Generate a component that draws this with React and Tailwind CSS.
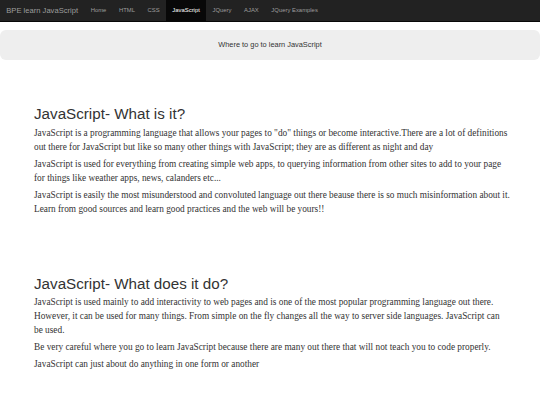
import React from "react";

const links = ["Home", "HTML", "CSS", "JavaScript", "JQuery", "AJAX", "JQuery Examples"];

const Section = ({ title, paras, className }) => (
  <div className={className}>
    <h2 className="text-[15.2px] leading-[1.1] text-[#333] mb-[3px]">{title}</h2>
    {paras.map((lines, i) => (
      <p key={i} className="font-['Liberation_Serif',serif] text-[9.3px] leading-[14px] text-[#333] mb-[3px]">
        {lines.map((line, j) => (
          <React.Fragment key={j}>
            {j > 0 && <br />}
            {line}
          </React.Fragment>
        ))}
      </p>
    ))}
  </div>
);

export default function App() {
  return (
    <div className="min-h-screen bg-white font-['Liberation_Sans',Arial,sans-serif]">
      {/* Navbar */}
      <nav className="h-[21.5px] bg-[#222] border-b border-[#080808] flex items-stretch pl-[6.3px]">
        <span className="flex items-center text-[7.6px] text-[#9d9d9d] pr-[6.3px]">BPE learn JavaScript</span>
        <ul className="flex items-stretch">
          {links.map((l) => (
            <li
              key={l}
              className={`flex items-center px-[6.3px] text-[5.9px] ${
                l === "JavaScript" ? "bg-[#080808] text-white" : "text-[#9d9d9d]"
              }`}
            >
              {l}
            </li>
          ))}
        </ul>
      </nav>

      {/* Jumbotron */}
      <div className="mt-[8.5px] h-[30px] rounded-[6px] bg-[#eee] flex items-center justify-center text-[7.4px] text-[#333]">
        Where to go to learn JavaScript
      </div>

      <div className="pl-[34px] pr-[4px]">
        <Section
          className="pt-[46px]"
          title="JavaScript- What is it?"
          paras={[
            [
              'JavaScript is a programming language that allows your pages to "do" things or become interactive.There are a lot of definitions',
              "out there for JavaScript but like so many other things with JavaScript; they are as different as night and day",
            ],
            [
              "JavaScript is used for everything from creating simple web apps, to querying information from other sites to add to your page",
              "for things like weather apps, news, calanders etc...",
            ],
            [
              "JavaScript is easily the most misunderstood and convoluted language out there beause there is so much misinformation about it.",
              "Learn from good sources and learn good practices and the web will be yours!!",
            ],
          ]}
        />
        <Section
          className="pt-[57px]"
          title="JavaScript- What does it do?"
          paras={[
            [
              "JavaScript is used mainly to add interactivity to web pages and is one of the most popular programming language out there.",
              "However, it can be used for many things. From simple on the fly changes all the way to server side languages. JavaScript can",
              "be used.",
            ],
            ["Be very careful where you go to learn JavaScript because there are many out there that will not teach you to code properly."],
            ["JavaScript can just about do anything in one form or another"],
          ]}
        />
      </div>
    </div>
  );
}
